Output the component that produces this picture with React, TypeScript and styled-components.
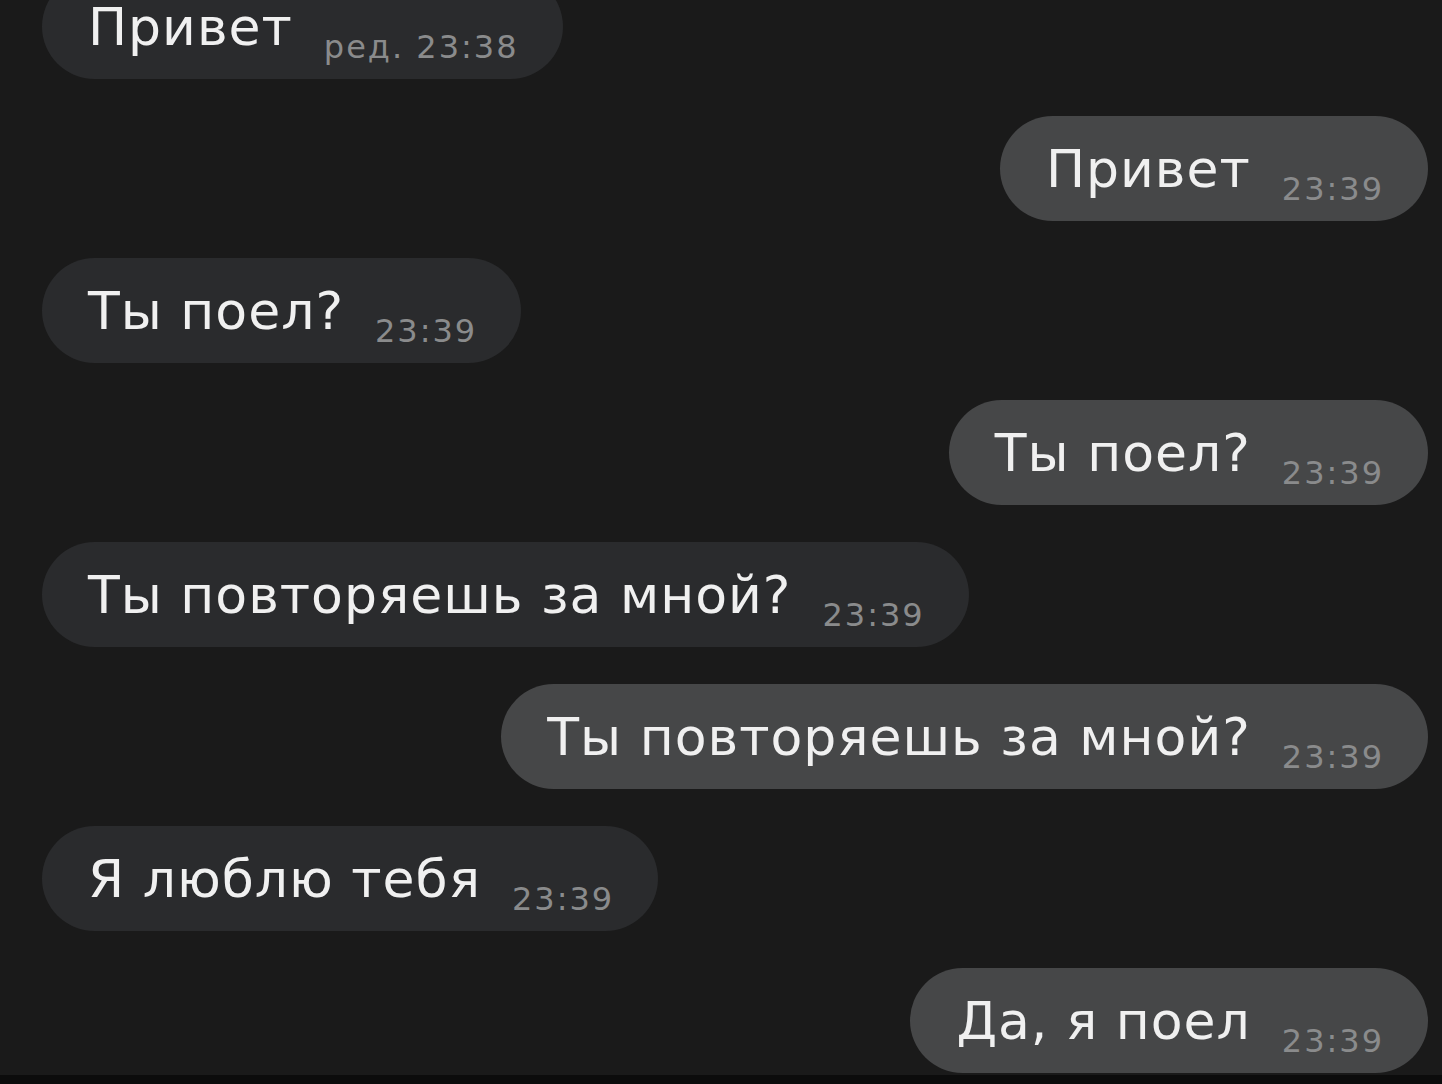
import React from "react";
import styled, { createGlobalStyle } from "styled-components";

type Message = {
  text: string;
  time: string;
  edited?: boolean;
  outgoing?: boolean;
};

const messages: Message[] = [
  { text: "Привет", time: "23:38", edited: true },
  { text: "Привет", time: "23:39", outgoing: true },
  { text: "Ты поел?", time: "23:39" },
  { text: "Ты поел?", time: "23:39", outgoing: true },
  { text: "Ты повторяешь за мной?", time: "23:39" },
  { text: "Ты повторяешь за мной?", time: "23:39", outgoing: true },
  { text: "Я люблю тебя", time: "23:39" },
  { text: "Да, я поел", time: "23:39", outgoing: true },
];

export default function App() {
  return (
    <>
      <GlobalStyle />
      <Screen>
        <ChatList>
          {messages.map((m, i) => (
            <Row key={i} outgoing={!!m.outgoing}>
              <Bubble outgoing={!!m.outgoing}>
                <Text>{m.text}</Text>
                <Time>{m.edited ? `ред. ${m.time}` : m.time}</Time>
              </Bubble>
            </Row>
          ))}
        </ChatList>
        <BottomBar />
      </Screen>
    </>
  );
}

const GlobalStyle = createGlobalStyle`
  html, body {
    margin: 0;
    padding: 0;
    background: #1a1a1a;
  }
  body {
    font-family: "DejaVu Sans", "Liberation Sans", sans-serif;
  }
`;

const Screen = styled.div`
  width: 1442px;
  height: 1084px;
  overflow: hidden;
  display: flex;
  flex-direction: column;
  background: #1a1a1a;
`;

const ChatList = styled.div`
  flex: 1;
  display: flex;
  flex-direction: column;
  gap: 37px;
  margin-top: -26px;
  padding: 0 14px 0 42px;
`;

const Row = styled.div<{ outgoing: boolean }>`
  display: flex;
  justify-content: ${(props) => (props.outgoing ? "flex-end" : "flex-start")};
`;

const Bubble = styled.div<{ outgoing: boolean }>`
  height: 105px;
  box-sizing: border-box;
  padding: 0 44px 0 46px;
  display: flex;
  align-items: center;
  gap: 31px;
  border-radius: 53px;
  background: ${(props) => (props.outgoing ? "#464748" : "#2a2b2d")};
`;

const Text = styled.span`
  font-size: 52px;
  line-height: 1;
  letter-spacing: 1px;
  color: #f0f0f0;
  white-space: nowrap;
`;

const Time = styled.span`
  align-self: flex-end;
  margin-bottom: 16px;
  font-size: 32px;
  line-height: 1;
  letter-spacing: 2px;
  color: #8a8b8c;
  white-space: nowrap;
`;

const BottomBar = styled.div`
  height: 9px;
  flex-shrink: 0;
  background: #0c0c0c;
`;
